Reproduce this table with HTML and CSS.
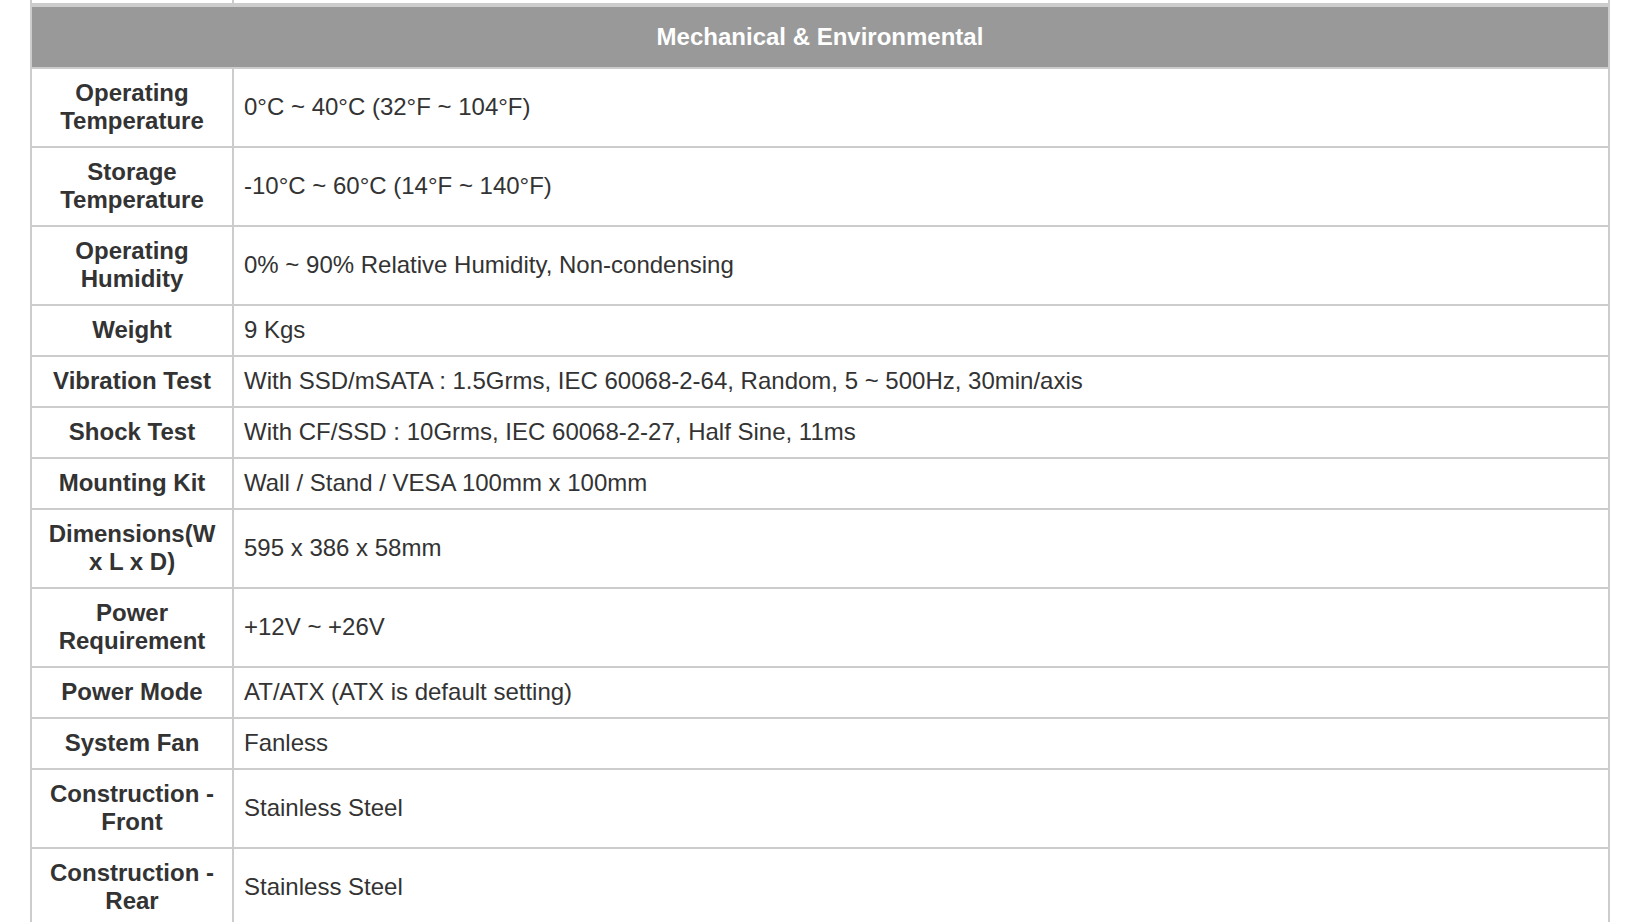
FILE: index.html
```html
<!DOCTYPE html>
<html lang="en">
<head>
<meta charset="utf-8">
<title>Mechanical &amp; Environmental</title>
<link rel="stylesheet" href="styles.css">
</head>
<body>
<div class="spec">
  <div class="row prev"><div class="label"></div><div class="value"></div></div>
  <div class="head">Mechanical &amp; Environmental</div>
  <div class="row"><div class="label">Operating Temperature</div><div class="value">0°C ~ 40°C (32°F ~ 104°F)</div></div>
  <div class="row"><div class="label">Storage Temperature</div><div class="value">-10°C ~ 60°C (14°F ~ 140°F)</div></div>
  <div class="row"><div class="label">Operating Humidity</div><div class="value">0% ~ 90% Relative Humidity, Non-condensing</div></div>
  <div class="row"><div class="label">Weight</div><div class="value">9 Kgs</div></div>
  <div class="row"><div class="label">Vibration Test</div><div class="value">With SSD/mSATA : 1.5Grms, IEC 60068-2-64, Random, 5 ~ 500Hz, 30min/axis</div></div>
  <div class="row"><div class="label">Shock Test</div><div class="value">With CF/SSD : 10Grms, IEC 60068-2-27, Half Sine, 11ms</div></div>
  <div class="row"><div class="label">Mounting Kit</div><div class="value">Wall / Stand / VESA 100mm x 100mm</div></div>
  <div class="row"><div class="label">Dimensions(W x L x D)</div><div class="value">595 x 386 x 58mm</div></div>
  <div class="row"><div class="label">Power Requirement</div><div class="value">+12V ~ +26V</div></div>
  <div class="row"><div class="label">Power Mode</div><div class="value">AT/ATX (ATX is default setting)</div></div>
  <div class="row"><div class="label">System Fan</div><div class="value">Fanless</div></div>
  <div class="row"><div class="label">Construction - Front</div><div class="value">Stainless Steel</div></div>
  <div class="row"><div class="label">Construction - Rear</div><div class="value">Stainless Steel</div></div>
</div>
</body>
</html>
```
FILE: styles.css
```css
html, body {
  margin: 0;
  padding: 0;
  background: #ffffff;
}

body {
  font-family: "Liberation Sans", Arial, sans-serif;
  color: #333333;
  font-size: 24px;
  line-height: 28px;
  overflow: hidden;
  height: 922px;
}

.spec {
  margin-left: 30px;
  width: 1580px;
  box-sizing: border-box;
  border-left: 2px solid #cccccc;
  border-right: 2px solid #cccccc;
}

.row {
  display: grid;
  grid-template-columns: 202px 1fr;
  border-bottom: 2px solid #cccccc;
}

.label {
  box-sizing: border-box;
  border-right: 2px solid #cccccc;
  padding: 10px 10px 11px;
  font-weight: bold;
  text-align: center;
  display: flex;
  align-items: center;
  justify-content: center;
}

.value {
  padding: 10px 10px 11px;
  display: flex;
  align-items: center;
}

.prev .label,
.prev .value {
  padding: 0;
  height: 3px;
}

.head {
  background: #999999;
  color: #ffffff;
  font-weight: bold;
  text-align: center;
  height: 60px;
  line-height: 60px;
  border-top: 2px solid #cccccc;
  border-bottom: 2px solid #cccccc;
}
```
